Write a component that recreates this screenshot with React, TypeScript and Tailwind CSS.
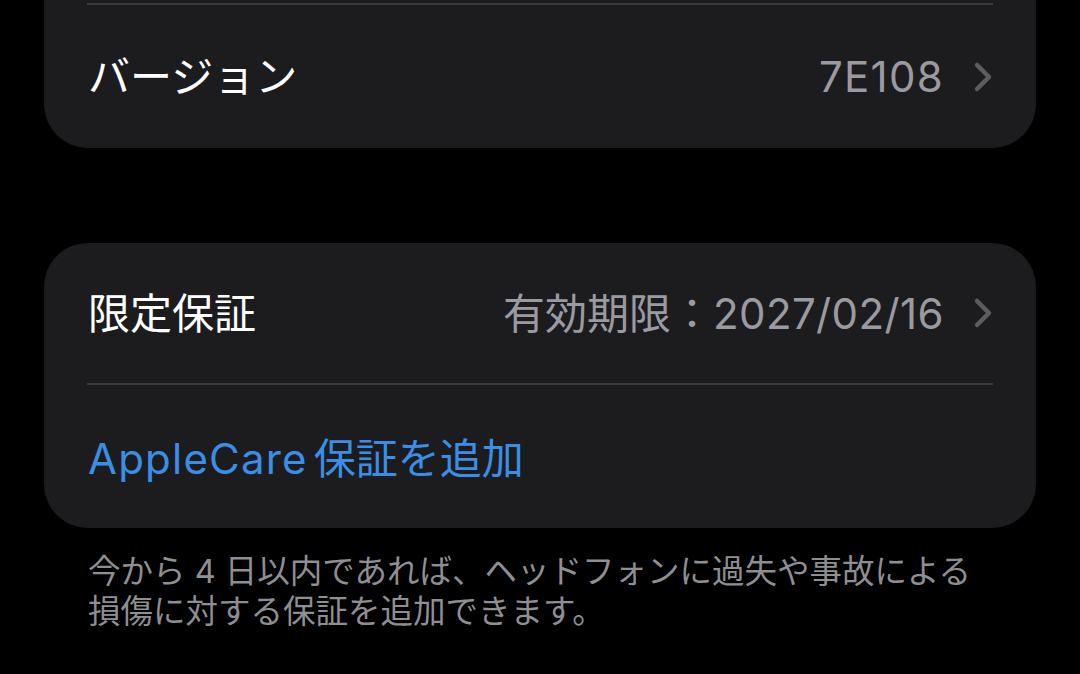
import React from 'react';

const font = { fontFamily: 'Inter, "Noto Sans CJK JP", sans-serif' };

function Chevron() {
  return (
    <svg width="22" height="32" viewBox="0 0 22 32" className="ml-[28px] shrink-0">
      <polyline
        points="5,4 17,16 5,28"
        fill="none"
        stroke="#5c5c61"
        strokeWidth="4.5"
        strokeLinecap="round"
        strokeLinejoin="round"
      />
    </svg>
  );
}

function Divider() {
  return <div className="ml-[43px] mr-[43px] h-[2px] bg-[#3a3a3c]" />;
}

function Row({ label, children, tall }: { label: string; children: React.ReactNode; tall: string }) {
  return (
    <div className={`flex items-center ${tall} pl-[44px] pr-[42px]`}>
      <span className="text-[42px] text-white">{label}</span>
      <div className="ml-auto flex items-center text-[42px] text-[#9a9aa0]">
        {children}
        <Chevron />
      </div>
    </div>
  );
}

export default function App() {
  return (
    <div className="w-[1080px] h-[674px] overflow-hidden bg-black px-[44px]" style={font}>
      {/* Version card (top cut off) */}
      <div className="bg-[#1c1c1e] rounded-b-[44px] pt-[3px]">
        <Divider />
        <Row label="バージョン" tall="h-[143px]">
          <span className="tracking-[1.3px]">7E108</span>
        </Row>
      </div>

      {/* Warranty card */}
      <div className="mt-[95px] bg-[#1c1c1e] rounded-[44px]">
        <Row label="限定保証" tall="h-[140px]">
          <span>有効期限：</span>
          <span className="tracking-[0.4px]">2027/02/16</span>
        </Row>
        <Divider />
        <div className="flex items-center h-[143px] pl-[44px] text-[42px] text-[#3a8ee6]">
          <span className="pt-[4px] tracking-[1.2px] mr-[6px]">AppleCare</span>
          <span className="pt-[4px]">保証を追加</span>
        </div>
      </div>

      <p className="mt-[24px] pl-[44px] pr-[40px] text-[32.5px] leading-[40px] text-[#8e8e93] whitespace-nowrap">
        今から 4 日以内であれば、ヘッドフォンに過失や事故による
        <br />
        損傷に対する保証を追加できます。
      </p>
    </div>
  );
}
